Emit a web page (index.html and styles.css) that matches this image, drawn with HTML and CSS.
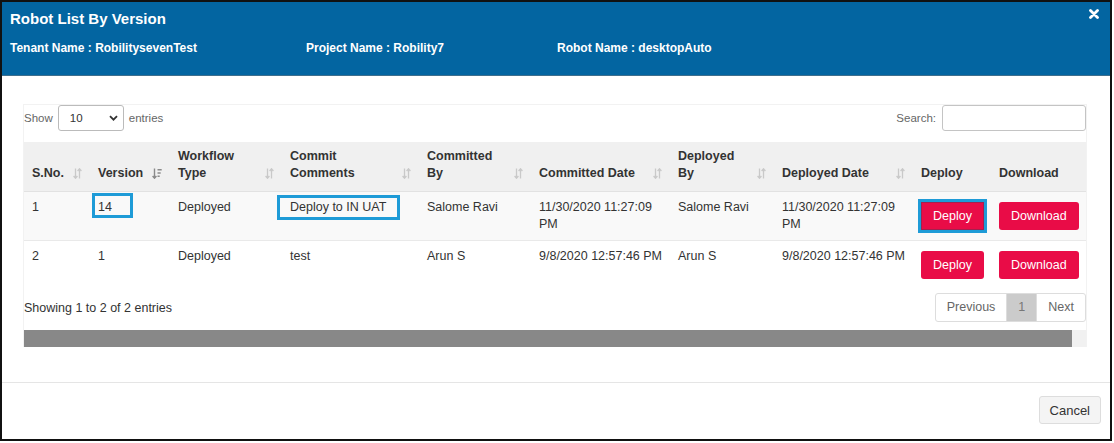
FILE: index.html
```html
<!DOCTYPE html>
<html lang="en">
<head>
<meta charset="utf-8">
<title>Robot List By Version</title>
<meta name="viewport" content="width=device-width,initial-scale=1">
<link rel="stylesheet" href="styles.css">
</head>
<body>

<div class="modal">
  <!-- header -->
  <header class="modal-head">
    <div class="title-row">
      <h2>Robot List By Version</h2>
      <button class="close" aria-label="Close">
        <svg width="10" height="10" viewBox="0 0 10 10"><path d="M1.5 1.5L8.5 8.5M8.5 1.5L1.5 8.5" stroke="#fff" stroke-width="2.8" stroke-linecap="round"/></svg>
      </button>
    </div>
    <div class="meta">
      <span>Tenant Name : RobilitysevenTest</span>
      <span>Project Name : Robility7</span>
      <span>Robot Name : desktopAuto</span>
    </div>
  </header>

  <!-- body -->
  <div class="modal-body">
    <div class="dt-wrap">
      <div class="dt-top">
        <div class="len">Show
          <span class="sel">10
            <svg width="9" height="6" viewBox="0 0 9 6"><path d="M1 1.2L4.5 4.7L8 1.2" fill="none" stroke="#333" stroke-width="1.8"/></svg>
          </span>
          entries</div>
        <label class="search">Search: <input type="text" aria-label="Search"></label>
      </div>

      <table class="dt">
        <colgroup>
          <col style="width:66px"><col style="width:80px"><col style="width:112px"><col style="width:137px"><col style="width:112px">
          <col style="width:139px"><col style="width:104px"><col style="width:139px"><col style="width:78px"><col style="width:95px">
        </colgroup>
        <thead>
          <tr>
            <th><div class="hd"><span>S.No.</span><svg class="sort" width="9" height="11" viewBox="0 0 9 11"><path d="M2.5 0.5V10M0.6 8L2.5 10.2L4.4 8M6.5 10.5V1M4.6 3L6.5 0.8L8.4 3" fill="none" stroke="#c9c9c9" stroke-width="1.3"/></svg></div></th>
            <th><div class="hd"><span>Version</span><svg class="sort" width="10" height="11" viewBox="0 0 10 11"><path d="M2.5 0.5V10M0.6 8L2.5 10.2L4.4 8" fill="none" stroke="#8a8a8a" stroke-width="1.4"/><path d="M5.5 1h4.2v1.6H5.5zM5.5 4.2h3.2v1.6H5.5zM5.5 7.4h2.2V9H5.5z" fill="#8a8a8a"/></svg></div></th>
            <th><div class="hd"><span>Workflow<br>Type</span><svg class="sort" width="9" height="11" viewBox="0 0 9 11"><path d="M2.5 0.5V10M0.6 8L2.5 10.2L4.4 8M6.5 10.5V1M4.6 3L6.5 0.8L8.4 3" fill="none" stroke="#c9c9c9" stroke-width="1.3"/></svg></div></th>
            <th><div class="hd"><span>Commit<br>Comments</span><svg class="sort" width="9" height="11" viewBox="0 0 9 11"><path d="M2.5 0.5V10M0.6 8L2.5 10.2L4.4 8M6.5 10.5V1M4.6 3L6.5 0.8L8.4 3" fill="none" stroke="#c9c9c9" stroke-width="1.3"/></svg></div></th>
            <th><div class="hd"><span>Committed<br>By</span><svg class="sort" width="9" height="11" viewBox="0 0 9 11"><path d="M2.5 0.5V10M0.6 8L2.5 10.2L4.4 8M6.5 10.5V1M4.6 3L6.5 0.8L8.4 3" fill="none" stroke="#c9c9c9" stroke-width="1.3"/></svg></div></th>
            <th><div class="hd"><span>Committed Date</span><svg class="sort" width="9" height="11" viewBox="0 0 9 11"><path d="M2.5 0.5V10M0.6 8L2.5 10.2L4.4 8M6.5 10.5V1M4.6 3L6.5 0.8L8.4 3" fill="none" stroke="#c9c9c9" stroke-width="1.3"/></svg></div></th>
            <th><div class="hd"><span>Deployed<br>By</span><svg class="sort" width="9" height="11" viewBox="0 0 9 11"><path d="M2.5 0.5V10M0.6 8L2.5 10.2L4.4 8M6.5 10.5V1M4.6 3L6.5 0.8L8.4 3" fill="none" stroke="#c9c9c9" stroke-width="1.3"/></svg></div></th>
            <th><div class="hd"><span>Deployed Date</span><svg class="sort" width="9" height="11" viewBox="0 0 9 11"><path d="M2.5 0.5V10M0.6 8L2.5 10.2L4.4 8M6.5 10.5V1M4.6 3L6.5 0.8L8.4 3" fill="none" stroke="#c9c9c9" stroke-width="1.3"/></svg></div></th>
            <th><div class="hd"><span>Deploy</span></div></th>
            <th><div class="hd"><span>Download</span></div></th>
          </tr>
        </thead>
        <tbody>
          <tr class="odd">
            <td>1</td>
            <td><span class="hl hl-ver">14</span></td>
            <td>Deployed</td>
            <td><span class="hl hl-cmt">Deploy to IN UAT</span></td>
            <td>Salome Ravi</td>
            <td>11/30/2020 11:27:09 PM</td>
            <td>Salome Ravi</td>
            <td>11/30/2020 11:27:09 PM</td>
            <td><button class="btn-red focus">Deploy</button></td>
            <td><button class="btn-red">Download</button></td>
          </tr>
          <tr>
            <td>2</td>
            <td>1</td>
            <td>Deployed</td>
            <td>test</td>
            <td>Arun S</td>
            <td>9/8/2020 12:57:46 PM</td>
            <td>Arun S</td>
            <td>9/8/2020 12:57:46 PM</td>
            <td><button class="btn-red">Deploy</button></td>
            <td><button class="btn-red">Download</button></td>
          </tr>
        </tbody>
      </table>

      <div class="dt-bottom">
        <div class="info">Showing 1 to 2 of 2 entries</div>
        <ul class="pager">
          <li>Previous</li>
          <li class="on">1</li>
          <li>Next</li>
        </ul>
      </div>
      <div class="hscroll"><div class="thumb"></div></div>
    </div>
  </div>

  <!-- footer -->
  <footer class="modal-foot">
    <button class="btn-cancel">Cancel</button>
  </footer>
</div>

</body>
</html>
```

FILE: styles.css
```css
*,*::after{box-sizing:border-box;margin:0;padding:0}
body{background:#fff;font-family:"Liberation Sans",Arial,sans-serif;color:#333}

.modal{width:1112px;height:441px;border:2px solid #111;display:flex;flex-direction:column;background:#fff}

/* header */
.modal-head{background:#0365a1;color:#fff;padding:7px 11px 19px 8px;border-bottom:1px solid #3f6f8d}
.title-row{display:flex;justify-content:space-between;align-items:flex-start}
.title-row h2{font-size:15px;font-weight:700;line-height:20px}
.close{background:none;border:none;cursor:pointer;display:block;line-height:0}
.meta{display:grid;grid-template-columns:296px 251px 1fr;margin-top:11px;font-size:12px;font-weight:700;line-height:16px}

/* body */
.modal-body{flex:1;padding:28px 23px 0 21px}
.dt-wrap{border:1px solid #f2f2f2;border-bottom:none}
.dt-top{display:flex;justify-content:space-between;align-items:center;height:26px;margin-bottom:11px;font-size:11.5px;color:#666}
.len{display:flex;align-items:center;gap:5px}
.sel{width:66px;height:26px;border:1px solid #bbb;border-radius:3px;display:flex;align-items:center;justify-content:space-between;padding:0 5px 0 11px;color:#333;font-size:11.5px}
.search{display:flex;align-items:center}
.search input{width:144px;height:26px;margin-left:6px;border:1px solid #c4c4c4;border-radius:3px;outline:none}

/* table */
.dt{width:1062px;table-layout:fixed;border-collapse:collapse;font-size:12.5px;line-height:17px}
.dt thead tr{background:#f0f0f0}
.dt th{text-align:left;vertical-align:bottom;padding:6px 8px 9px;font-weight:700;border-bottom:1px solid #e2e2e2}
.hd{display:flex;justify-content:space-between;align-items:flex-end}
.sort{flex:none;margin-bottom:3px}
.dt td{vertical-align:top;padding:7px 8px;border-top:1px solid #e9e9e9}
.dt tr.odd{background:#f9f9f9}

.hl{display:inline-block;position:relative}
.hl::after{content:"";position:absolute;border:3px solid #1e9bd7}
.hl-ver::after{left:-6px;top:-6px;width:41px;height:25px}
.hl-cmt::after{left:-13px;top:-4px;width:123px;height:25px}

.btn-red{display:inline-block;vertical-align:top;height:28px;line-height:28px;margin:3px 0;padding:0 12px;border:none;border-radius:3px;background:#e90c47;color:#fff;font-family:inherit;font-size:12.5px;cursor:pointer}
.btn-red.focus{outline:3px solid #1e9bd7;outline-offset:0;border-radius:0;box-shadow:inset 0 0 0 1px #a3204f}

.dt-bottom{display:flex;justify-content:space-between;align-items:center;margin-top:4px;font-size:12.5px}
.pager{list-style:none;display:flex;border:1px solid #ddd;border-radius:3px;height:29px}
.pager li{padding:0 11px;line-height:27px;color:#666}
.pager li+li{border-left:1px solid #ddd}
.pager li.on{background:#cbcbcb;color:#777}

.hscroll{margin-top:8px;height:17px;background:#f1f1f1;display:flex}
.hscroll .thumb{width:1048px;background:#888}

/* footer */
.modal-foot{border-top:1px solid #e5e5e5;padding:13px 9px 15px;text-align:right}
.btn-cancel{height:28px;padding:0 10px;background:#f4f4f4;border:1px solid #ddd;border-radius:3px;font-family:inherit;font-size:13px;color:#333;cursor:pointer}
```
